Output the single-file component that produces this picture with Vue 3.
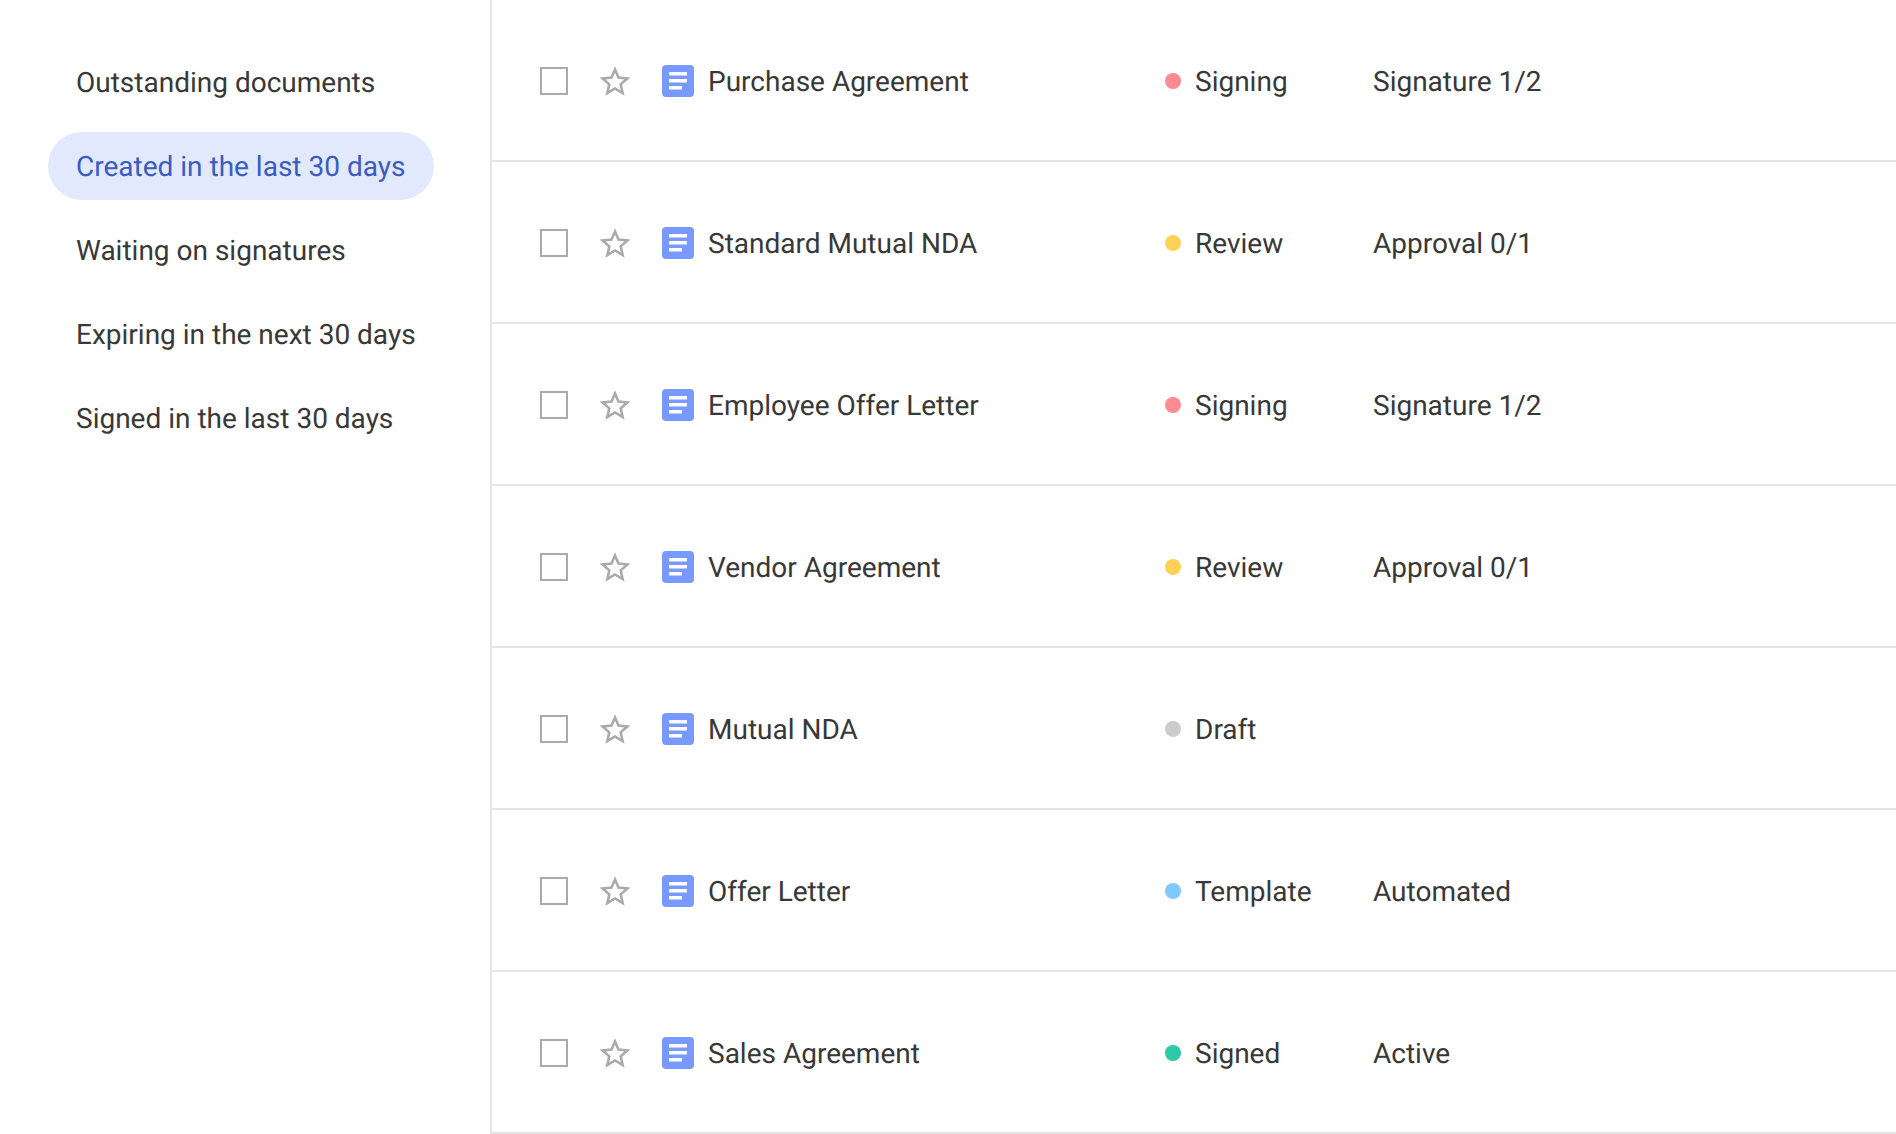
<script setup>
const views = [
  { label: 'Outstanding documents' },
  { label: 'Created in the last 30 days', active: true },
  { label: 'Waiting on signatures' },
  { label: 'Expiring in the next 30 days' },
  { label: 'Signed in the last 30 days' },
]
const docs = [
  { name: 'Purchase Agreement', status: 'Signing', tone: 'signing', meta: 'Signature 1/2' },
  { name: 'Standard Mutual NDA', status: 'Review', tone: 'review', meta: 'Approval 0/1' },
  { name: 'Employee Offer Letter', status: 'Signing', tone: 'signing', meta: 'Signature 1/2' },
  { name: 'Vendor Agreement', status: 'Review', tone: 'review', meta: 'Approval 0/1' },
  { name: 'Mutual NDA', status: 'Draft', tone: 'draft', meta: '' },
  { name: 'Offer Letter', status: 'Template', tone: 'template', meta: 'Automated' },
  { name: 'Sales Agreement', status: 'Signed', tone: 'signed', meta: 'Active' },
]
</script>

<template>
  <div class="page">
    <nav class="sidebar">
      <div v-for="v in views" :key="v.label" class="view" :class="{ active: v.active }">{{ v.label }}</div>
    </nav>
    <main class="list">
      <div v-for="d in docs" :key="d.name" class="row">
        <span class="check"></span>
        <svg class="star" width="32" height="32" viewBox="0 0 32 32" fill="none">
          <path d="M16 4.5L19.53 12.65 28.36 13.48 21.71 19.35 23.64 28.02 16 23.5 8.36 28.02 10.29 19.35 3.64 13.48 12.47 12.65Z" stroke="#aaa" stroke-width="2.6" stroke-linejoin="miter" />
        </svg>
        <svg class="doc" width="32" height="32" viewBox="0 0 32 32">
          <rect width="32" height="32" rx="4" fill="#7899ff" />
          <rect x="7" y="7" width="18" height="3.5" fill="#fff" />
          <rect x="7" y="14" width="18" height="3.5" fill="#fff" />
          <rect x="7" y="21" width="13" height="3.5" fill="#fff" />
        </svg>
        <span class="name">{{ d.name }}</span>
        <span class="status"><i class="dot" :class="d.tone"></i>{{ d.status }}</span>
        <span class="meta">{{ d.meta }}</span>
      </div>
    </main>
  </div>
</template>

<style>
html, body { margin: 0; background: #fff; }
</style>

<style scoped>
.page {
  display: flex;
  height: 1134px;
  overflow: hidden;
  font-family: Roboto, sans-serif;
  font-size: 28px;
  color: #383838;
  background: #fff;
  text-rendering: geometricPrecision;
}
.sidebar {
  box-sizing: border-box;
  width: 492px;
  flex: none;
  padding: 48px 0 0 48px;
  border-right: 2px solid #e5e5e5;
  display: flex;
  flex-direction: column;
  gap: 16px;
}
.view {
  box-sizing: border-box;
  width: 386px;
  height: 68px;
  line-height: 66px;
  padding: 2px 0 0 28px;
  border-radius: 34px;
}
.view.active {
  background: #e3e9fc;
  color: #3a5cc0;
}
.list { flex: 1; min-width: 0; }
.row {
  box-sizing: border-box;
  height: 162px;
  padding: 2px 0 0 48px;
  border-bottom: 2px solid #e5e5e5;
  display: flex;
  align-items: center;
}
.check {
  box-sizing: border-box;
  width: 28px;
  height: 28px;
  border: 2px solid #aaa;
  flex: none;
}
.star { margin-left: 31px; flex: none; }
.doc { margin-left: 31px; flex: none; }
.name { margin-left: 14px; width: 457px; flex: none; }
.status { display: flex; align-items: center; width: 208px; flex: none; }
.dot { width: 16px; height: 16px; border-radius: 50%; margin-right: 14px; flex: none; }
.signing { background: #ff8a8f; }
.review { background: #ffd257; }
.draft { background: #ccc; }
.template { background: #80c8ff; }
.signed { background: #2cc9a8; }
</style>
